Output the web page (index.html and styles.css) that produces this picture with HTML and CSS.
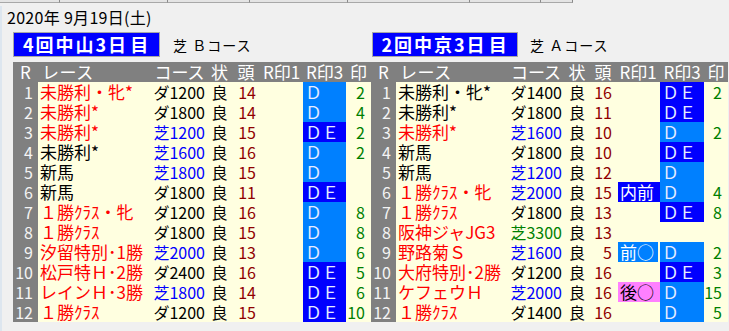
FILE: index.html
```html
<!DOCTYPE html>
<html lang="ja">
<head>
<meta charset="utf-8">
<title>開催レース一覧</title>
<link rel="stylesheet" href="styles.css">
</head>
<body>
<div class="topbar"><span class="tb t1"></span><span class="tb t2"></span><span class="tb t3"></span><span class="tb t4"></span><span class="tb t5"></span><span class="tb t6"></span><span class="tb t7"></span></div>
<main class="page">
  <div class="date">2020年 9月19日(土)</div>
  <div class="panels">
    <section class="panel pl">
      <div class="venue"><div class="vbox">4回中山3日<span class="gap">目</span></div><span class="surf">芝 Ｂコース</span></div>
      <table class="races">
        <colgroup><col class="c-r"><col class="c-nm"><col class="c-cs"><col class="c-st"><col class="c-hd"><col class="c-m1"><col class="c-m3"><col class="c-mk"></colgroup>
        <thead><tr><th>R</th><th class="hn">レース</th><th>コース</th><th>状</th><th>頭</th><th>R印1</th><th>R印3</th><th>印</th></tr></thead>
        <tbody>
          <tr><td class="r">1</td><td class="nm red">未勝利・牝*</td><td class="cs">ダ1200</td><td class="st">良</td><td class="hd">14</td><td class="m1"></td><td class="m3 b1">Ｄ</td><td class="mk">2</td></tr>
          <tr><td class="r">2</td><td class="nm red">未勝利*</td><td class="cs">ダ1800</td><td class="st">良</td><td class="hd">14</td><td class="m1"></td><td class="m3 b1">Ｄ</td><td class="mk">4</td></tr>
          <tr><td class="r">3</td><td class="nm red">未勝利*</td><td class="cs blu">芝1200</td><td class="st">良</td><td class="hd">15</td><td class="m1"></td><td class="m3 b2">ＤＥ</td><td class="mk">2</td></tr>
          <tr><td class="r">4</td><td class="nm">未勝利*</td><td class="cs blu">芝1600</td><td class="st">良</td><td class="hd">16</td><td class="m1"></td><td class="m3 b1">Ｄ</td><td class="mk">2</td></tr>
          <tr><td class="r">5</td><td class="nm">新馬</td><td class="cs blu">芝1800</td><td class="st">良</td><td class="hd">15</td><td class="m1"></td><td class="m3 b1">Ｄ</td><td class="mk"></td></tr>
          <tr><td class="r">6</td><td class="nm">新馬</td><td class="cs">ダ1800</td><td class="st">良</td><td class="hd">11</td><td class="m1"></td><td class="m3 b2">ＤＥ</td><td class="mk"></td></tr>
          <tr><td class="r">7</td><td class="nm red">１勝ｸﾗｽ・牝</td><td class="cs">ダ1200</td><td class="st">良</td><td class="hd">16</td><td class="m1"></td><td class="m3 b1">Ｄ</td><td class="mk">8</td></tr>
          <tr><td class="r">8</td><td class="nm red">１勝ｸﾗｽ</td><td class="cs">ダ1800</td><td class="st">良</td><td class="hd">15</td><td class="m1"></td><td class="m3 b1">Ｄ</td><td class="mk">8</td></tr>
          <tr><td class="r">9</td><td class="nm red">汐留特別･1勝</td><td class="cs blu">芝2000</td><td class="st">良</td><td class="hd">13</td><td class="m1"></td><td class="m3 b1">Ｄ</td><td class="mk">6</td></tr>
          <tr><td class="r">10</td><td class="nm red">松戸特Ｈ･2勝</td><td class="cs">ダ2400</td><td class="st">良</td><td class="hd">16</td><td class="m1"></td><td class="m3 b2">ＤＥ</td><td class="mk">5</td></tr>
          <tr><td class="r">11</td><td class="nm red">レインＨ･3勝</td><td class="cs blu">芝1800</td><td class="st">良</td><td class="hd">14</td><td class="m1"></td><td class="m3 b2">ＤＥ</td><td class="mk">6</td></tr>
          <tr><td class="r">12</td><td class="nm red">１勝ｸﾗｽ</td><td class="cs">ダ1200</td><td class="st">良</td><td class="hd">15</td><td class="m1"></td><td class="m3 b2">ＤＥ</td><td class="mk">10</td></tr>
        </tbody>
      </table>
    </section>
    <section class="panel pr">
      <div class="venue"><div class="vbox">2回中京3日<span class="gap">目</span></div><span class="surf">芝 Ａコース</span></div>
      <table class="races">
        <colgroup><col class="c-r"><col class="c-nm2"><col class="c-cs2"><col class="c-st2"><col class="c-hd2"><col class="c-m12"><col class="c-m32"><col class="c-mk2"></colgroup>
        <thead><tr><th>R</th><th class="hn">レース</th><th>コース</th><th>状</th><th>頭</th><th>R印1</th><th>R印3</th><th>印</th></tr></thead>
        <tbody>
          <tr><td class="r">1</td><td class="nm">未勝利・牝*</td><td class="cs">ダ1400</td><td class="st">良</td><td class="hd">16</td><td class="m1"></td><td class="m3 b2">ＤＥ</td><td class="mk">2</td></tr>
          <tr><td class="r">2</td><td class="nm">未勝利*</td><td class="cs">ダ1800</td><td class="st">良</td><td class="hd">11</td><td class="m1"></td><td class="m3 b2">ＤＥ</td><td class="mk"></td></tr>
          <tr><td class="r">3</td><td class="nm red">未勝利*</td><td class="cs blu">芝1600</td><td class="st">良</td><td class="hd">10</td><td class="m1"></td><td class="m3 b1">Ｄ</td><td class="mk">2</td></tr>
          <tr><td class="r">4</td><td class="nm">新馬</td><td class="cs">ダ1800</td><td class="st">良</td><td class="hd">10</td><td class="m1"></td><td class="m3 b2">ＤＥ</td><td class="mk"></td></tr>
          <tr><td class="r">5</td><td class="nm">新馬</td><td class="cs blu">芝1200</td><td class="st">良</td><td class="hd">12</td><td class="m1"></td><td class="m3 b1">Ｄ</td><td class="mk"></td></tr>
          <tr><td class="r">6</td><td class="nm red">１勝ｸﾗｽ・牝</td><td class="cs blu">芝2000</td><td class="st">良</td><td class="hd">15</td><td class="m1"><span class="tag tg-navy">内前</span></td><td class="m3 b1">Ｄ</td><td class="mk">4</td></tr>
          <tr><td class="r">7</td><td class="nm red">１勝ｸﾗｽ</td><td class="cs">ダ1800</td><td class="st">良</td><td class="hd">13</td><td class="m1"></td><td class="m3 b2">ＤＥ</td><td class="mk">8</td></tr>
          <tr><td class="r">8</td><td class="nm red">阪神ジャJG3</td><td class="cs grn">芝3300</td><td class="st">良</td><td class="hd">13</td><td class="m1"></td><td class="m3"></td><td class="mk"></td></tr>
          <tr><td class="r">9</td><td class="nm red">野路菊Ｓ</td><td class="cs blu">芝1600</td><td class="st">良</td><td class="hd">5</td><td class="m1"><span class="tag tg-sky">前○</span></td><td class="m3 b1">Ｄ</td><td class="mk">2</td></tr>
          <tr><td class="r">10</td><td class="nm red">大府特別･2勝</td><td class="cs">ダ1200</td><td class="st">良</td><td class="hd">16</td><td class="m1"></td><td class="m3 b2">ＤＥ</td><td class="mk">3</td></tr>
          <tr><td class="r">11</td><td class="nm red">ケフェウＨ</td><td class="cs blu">芝2000</td><td class="st">良</td><td class="hd">16</td><td class="m1"><span class="tag tg-pink">後○</span></td><td class="m3 b1">Ｄ</td><td class="mk">15</td></tr>
          <tr><td class="r">12</td><td class="nm red">１勝ｸﾗｽ</td><td class="cs">ダ1400</td><td class="st">良</td><td class="hd">16</td><td class="m1"></td><td class="m3 b1">Ｄ</td><td class="mk">5</td></tr>
        </tbody>
      </table>
    </section>
  </div>
</main>
</body>
</html>
```

FILE: styles.css
```css
* { box-sizing: border-box; }
html, body {
  margin: 0;
  padding: 0;
  background: #f0f0f0;
  overflow: hidden;
}
body {
  width: 729px;
  height: 331px;
  font-family: "Noto Sans CJK JP", "Noto Sans", sans-serif;
  color: #000;
}

.topbar {
  display: flex;
  height: 3px;
}
.tb {
  display: block;
  height: 3px;
  background: #e4e4e4;
  border-bottom: 1px solid #a8a8a8;
  border-right: 1px solid #8a8a8a;
}
.t1 { width: 60px; }
.t2 { width: 108px; }
.t3 { width: 82px; }
.t4 { width: 98px; }
.t5 { width: 122px; }
.t6 { width: 71px; }
.t7 { width: 32px; }

.page {
  border-left: 2px solid #dde6ef;
  padding-left: 11px;
  height: 328px;
}

.date {
  margin-top: 3px;
  margin-left: -6px;
  height: 22px;
  line-height: 22px;
  font-size: 16px;
  letter-spacing: 0.3px;
  white-space: pre;
}

.panels {
  display: flex;
  margin-top: 4px;
}
.pl { width: 358px; }
.pr { width: 357px; }

.venue {
  display: flex;
  align-items: center;
  height: 25px;
}
.vbox {
  width: 147px;
  height: 25px;
  border: 1px solid #a8a8a8;
  background: #0000ff;
  color: #fff;
  font-size: 18px;
  font-weight: 700;
  letter-spacing: 2px;
  line-height: 23px;
  text-align: center;
  white-space: nowrap;
}
.pr .vbox { width: 146px; margin-left: 1px; }
.gap { margin-left: 2px; }
.surf {
  margin-left: 13px;
  font-size: 14px;
  letter-spacing: 1px;
  white-space: pre;
}
.pr .surf { margin-left: 12px; }

.races {
  margin-top: 5px;
  border-collapse: collapse;
  table-layout: fixed;
  width: 100%;
}
.c-r { width: 25px; }
.c-nm { width: 114px; }
.c-cs { width: 55px; }
.c-st { width: 25px; }
.c-hd { width: 28px; }
.c-m1 { width: 43px; }
.c-m3 { width: 43px; }
.c-mk { width: 25px; }
.c-nm2 { width: 112px; }
.c-cs2 { width: 56px; }
.c-st2 { width: 26px; }
.c-hd2 { width: 26px; }
.c-m12 { width: 44px; }
.c-m32 { width: 44px; }
.c-mk2 { width: 24px; }

.races th {
  height: 20px;
  padding: 0;
  background: #808080;
  color: #fff;
  font-size: 17px;
  font-weight: 400;
  line-height: 20px;
  text-align: center;
  white-space: nowrap;
}
.races th.hn { text-align: left; padding-left: 4px; letter-spacing: 0.5px; }

.races td {
  height: 20px;
  padding: 0;
  background: #ffffe0;
  font-size: 16px;
  line-height: 20px;
  white-space: nowrap;
}
.races td.r {
  background: #808080;
  color: #f4f4f4;
  text-align: right;
  padding-right: 5px;
}
.races td.nm {
  padding-left: 2px;
  font-size: 17px;
}
.races td.cs {
  text-align: right;
  padding-right: 2px;
}
.races td.st { text-align: center; }
.races td.hd {
  text-align: right;
  padding-right: 4px;
  color: #900000;
}
.races td.m1 { padding-left: 2px; }
.races td.m3 {
  padding-left: 2px;
  font-size: 17px;
  color: #e4ecff;
}
.races td.b1 { background: #0080ff; }
.races td.b2 { background: #0000ff; }
.races td.mk {
  text-align: right;
  padding-right: 6px;
  color: #008000;
}

.red { color: #ff0000; }
.races td.blu { color: #0000ff; }
.races td.grn { color: #008000; }

.tag {
  display: block;
  height: 20px;
  line-height: 20px;
  padding-left: 2px;
  font-size: 17px;
}
.tg-navy { background: #0000ff; color: #fff; }
.tg-sky { background: #0080ff; color: #fff; margin-right: 2px; }
.tg-pink { background: #ff80ff; color: #000; }
```
